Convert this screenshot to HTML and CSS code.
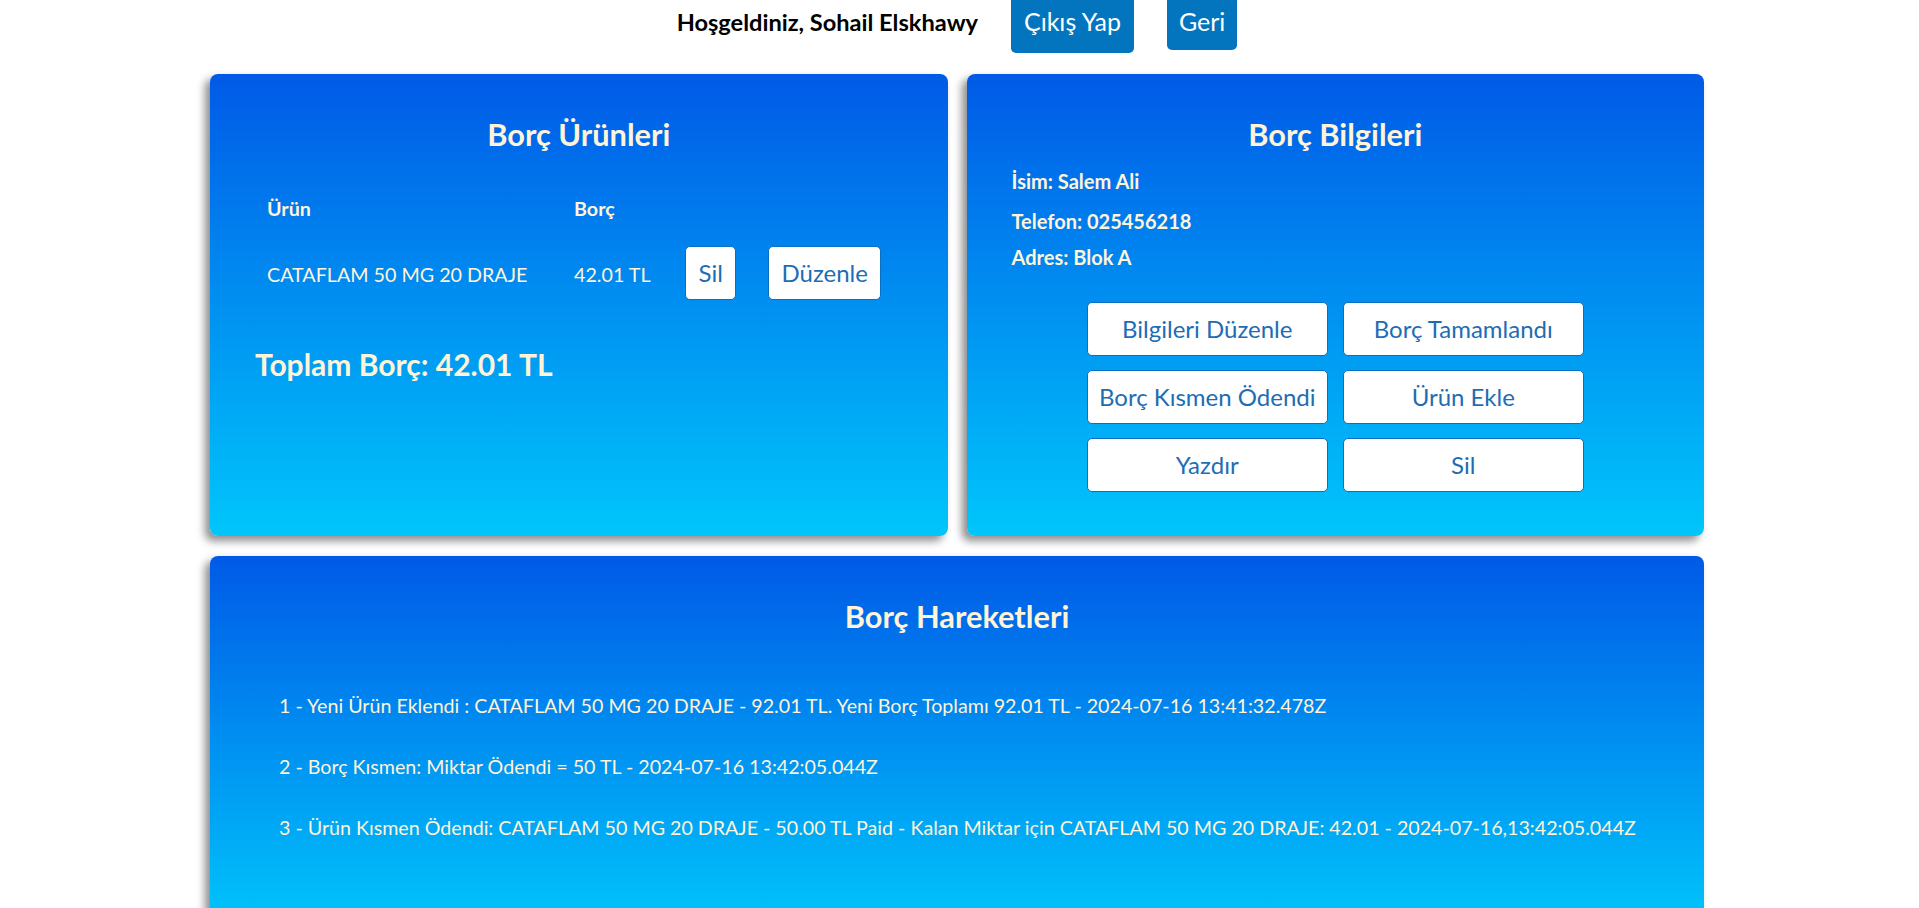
FILE: index.html
```html
<!DOCTYPE html>
<html lang="tr">
<head>
<meta charset="utf-8">
<title>Borç Detayı</title>
<link rel="stylesheet" href="styles.css">
</head>
<body>
<header class="topbar">
  <span class="welcome">Hoşgeldiniz, Sohail Elskhawy</span>
  <button class="top-btn top-btn--logout">Çıkış Yap</button>
  <button class="top-btn top-btn--back">Geri</button>
</header>
<main class="page">
  <div class="top-row">
    <section class="card">
      <h2 class="card-title">Borç Ürünleri</h2>
      <div class="product-table">
        <div class="th">Ürün</div>
        <div class="th">Borç</div>
        <div></div>
        <div></div>
        <div class="td">CATAFLAM 50 MG 20 DRAJE</div>
        <div class="td">42.01 TL</div>
        <div><button class="btn">Sil</button></div>
        <div><button class="btn">Düzenle</button></div>
      </div>
      <h2 class="total">Toplam Borç: 42.01 TL</h2>
    </section>
    <section class="card">
      <h2 class="card-title">Borç Bilgileri</h2>
      <div class="info">
        <p class="info-line">İsim: Salem Ali</p>
        <p class="info-line info-line--phone">Telefon: 025456218</p>
        <p class="info-line info-line--address">Adres: Blok A</p>
      </div>
      <div class="actions">
        <button class="btn btn--wide">Bilgileri Düzenle</button>
        <button class="btn btn--wide">Borç Tamamlandı</button>
        <button class="btn btn--wide">Borç Kısmen Ödendi</button>
        <button class="btn btn--wide">Ürün Ekle</button>
        <button class="btn btn--wide">Yazdır</button>
        <button class="btn btn--wide">Sil</button>
      </div>
    </section>
  </div>
  <section class="card card--history">
    <h2 class="card-title">Borç Hareketleri</h2>
    <ul class="history">
      <li>1 - Yeni Ürün Eklendi : CATAFLAM 50 MG 20 DRAJE - 92.01 TL. Yeni Borç Toplamı 92.01 TL - 2024-07-16 13:41:32.478Z</li>
      <li>2 - Borç Kısmen: Miktar Ödendi = 50 TL - 2024-07-16 13:42:05.044Z</li>
      <li>3 - Ürün Kısmen Ödendi: CATAFLAM 50 MG 20 DRAJE - 50.00 TL Paid - Kalan Miktar için CATAFLAM 50 MG 20 DRAJE: 42.01 - 2024-07-16,13:42:05.044Z</li>
    </ul>
  </section>
</main>
</body>
</html>
```
FILE: styles.css
```css
* { box-sizing: border-box; }

html {
  overflow: hidden;
}

html, body {
  margin: 0;
  padding: 0;
}

body {
  font-family: Lato, "Open Sans", sans-serif;
  background: #ffffff;
  color: #000;
  padding-right: 5px;
}

.topbar {
  display: flex;
  justify-content: center;
  align-items: baseline;
  gap: 33px;
}

.welcome {
  font-size: 23.6px;
  font-weight: 700;
  line-height: 1.2;
}

.top-btn {
  font-family: inherit;
  font-size: 25px;
  line-height: 29px;
  color: #ffffff;
  background: #0275be;
  border: none;
  border-radius: 0 0 5px 5px;
  padding: 7px 13px 17px;
  cursor: pointer;
}

.top-btn--back {
  padding: 7px 12px 14px;
}

.page {
  width: 1494px;
  margin: 21px auto 0;
}

.top-row {
  display: grid;
  grid-template-columns: 1fr 1fr;
  gap: 19px;
}

.card {
  background: linear-gradient(180deg, #005ae7 0%, #00c6fb 100%);
  border-radius: 8px;
  box-shadow: -5px 5px 8px rgba(0, 0, 0, 0.45);
  padding: 43px 45px 44px;
  color: #fff4d8;
}

.card-title {
  margin: 0;
  font-size: 30.8px;
  line-height: 36px;
  font-weight: 700;
  text-align: center;
}

.product-table {
  display: grid;
  grid-template-columns: 307px 111px 83px auto;
  row-gap: 25px;
  align-items: center;
  margin: 44px 0 0 12px;
}

.th {
  font-size: 19.7px;
  font-weight: 700;
  line-height: 24px;
}

.td {
  font-size: 19.7px;
  line-height: 24px;
  padding-top: 3px;
}

.btn {
  font-family: inherit;
  font-size: 24px;
  line-height: 28px;
  height: 54px;
  color: #1d6db5;
  background: #ffffff;
  border: 1px solid #0a6fc0;
  border-radius: 5px;
  padding: 0 12.5px;
  cursor: pointer;
}

.total {
  margin: 46px 0 0;
  font-size: 30px;
  line-height: 36px;
  font-weight: 700;
}

.info {
  display: flex;
  flex-direction: column;
  margin-top: 16px;
}

.info-line {
  margin: 0;
  font-size: 20px;
  line-height: 24px;
  font-weight: 700;
}

.info-line--phone {
  margin-top: 16px;
}

.info-line--address {
  margin-top: 12px;
}

.actions {
  display: grid;
  grid-template-columns: 241px 241px;
  justify-content: center;
  gap: 14px 15px;
  margin-top: 33px;
}

.btn--wide {
  width: 100%;
  padding: 0 4px;
}

.card--history {
  margin-top: 20px;
  padding-bottom: 90px;
}

.history {
  list-style: none;
  margin: 59px 0 0;
  padding: 0 0 0 24px;
  display: flex;
  flex-direction: column;
  gap: 37px;
}

.history li {
  font-size: 19.65px;
  line-height: 24px;
  white-space: nowrap;
}
```
